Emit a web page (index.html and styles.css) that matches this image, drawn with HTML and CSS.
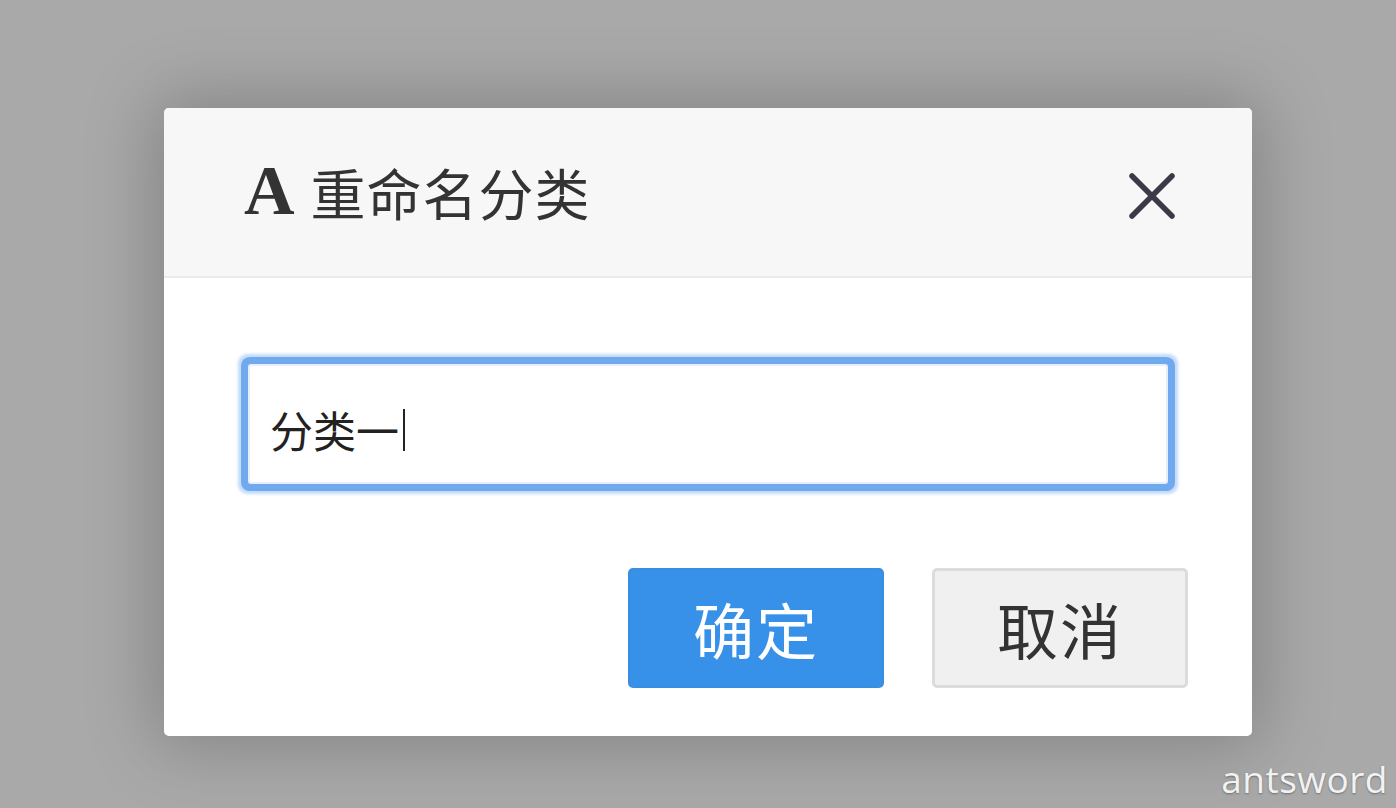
FILE: index.html
```html
<!DOCTYPE html>
<html lang="zh-CN">
<head>
<meta charset="utf-8">
<title>重命名分类</title>
<link rel="stylesheet" href="styles.css">
</head>
<body>
<div class="stage">
  <div class="dialog">
    <div class="dialog-header">
      <div class="title"><span class="title-icon">A</span><span class="title-text">重命名分类</span></div>
      <svg class="close" width="46" height="46" viewBox="0 0 46 46" aria-hidden="true">
        <path d="M3 3 L43 43 M43 3 L3 43" stroke="#3b3b47" stroke-width="5.5" stroke-linecap="round"/>
      </svg>
    </div>
    <div class="dialog-body">
      <div class="input"><span class="value">分类一</span><span class="caret"></span></div>
      <div class="actions">
        <div class="btn btn-primary">确定</div>
        <div class="btn btn-default">取消</div>
      </div>
    </div>
  </div>
</div>
<div class="watermark">antsword</div>
</body>
</html>
```

FILE: styles.css
```css
html, body {
  margin: 0;
  padding: 0;
  height: 100%;
}
body {
  background: #a9a9a9;
  overflow: hidden;
  font-family: "Liberation Serif", "Noto Sans CJK SC", serif;
}
.stage {
  padding: 108px 0 0 164px;
}
.dialog {
  width: 1088px;
  height: 628px;
  background: #ffffff;
  border-radius: 5px;
  box-shadow: 0 0 70px 10px rgba(0, 0, 0, 0.22);
  display: flex;
  flex-direction: column;
  overflow: hidden;
}
.dialog-header {
  height: 168px;
  background: #f7f7f7;
  border-bottom: 2px solid #ebebeb;
  display: flex;
  align-items: center;
  justify-content: space-between;
  padding: 0 77px 0 80px;
}
.title {
  display: flex;
  align-items: center;
  color: #333;
  margin-top: -2px;
}
.title-icon {
  font-family: "Liberation Serif", serif;
  font-weight: bold;
  font-size: 70px;
  line-height: 1;
  margin-right: 16px;
}
.title-text {
  font-family: "Noto Sans CJK SC", sans-serif;
  font-size: 55px;
  line-height: 1;
  letter-spacing: 1px;
}
.close {
  display: block;
  margin-top: 8px;
}
.dialog-body {
  flex: 1;
  display: flex;
  flex-direction: column;
  padding: 0 64px 48px 84px;
}
.input {
  margin-top: 86px;
  width: 920px;
  height: 120px;
  box-sizing: border-box;
  border: 2px solid #e5eefa;
  border-radius: 3px;
  box-shadow: 0 0 0 7px #71a9ef, 0 0 3px 10px rgba(120, 175, 240, 0.45);
  display: flex;
  align-items: center;
  padding-left: 20px;
  padding-top: 10px;
  background: #fff;
}
.value {
  font-family: "Noto Sans CJK SC", sans-serif;
  font-size: 43px;
  color: #222;
  line-height: 1;
}
.caret {
  width: 2px;
  height: 42px;
  background: #222;
  margin-left: 4px;
  margin-top: 2px;
}
.actions {
  margin-top: auto;
  display: flex;
  justify-content: flex-end;
  gap: 48px;
}
.btn {
  width: 256px;
  height: 120px;
  box-sizing: border-box;
  border-radius: 5px;
  display: flex;
  align-items: center;
  justify-content: center;
  font-family: "Noto Sans CJK SC", serif;
  font-size: 61px;
  letter-spacing: 2px;
}
.btn-primary {
  background: #3891e8;
  border: 2px solid #3a8ee0;
  color: #fff;
}
.btn-default {
  background: #f0f0f0;
  border: 3px solid #dcdcdc;
  color: #333;
}
.watermark {
  position: absolute;
  right: 8px;
  bottom: 4px;
  font-family: "Open Sans", sans-serif;
  font-size: 37px;
  color: #f2f2f2;
  text-shadow: 0 1px 2px rgba(0, 0, 0, 0.35);
  letter-spacing: 0.5px;
}
```
